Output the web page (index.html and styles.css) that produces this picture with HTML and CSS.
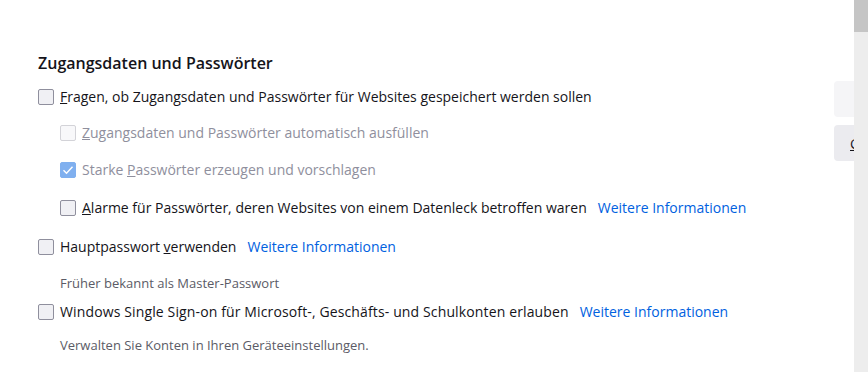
FILE: index.html
```html
<!DOCTYPE html>
<html lang="de">
<head>
    <meta charset="UTF-8">
    <title>Einstellungen</title>
    <link rel="stylesheet" href="styles.css">
</head>
<body>
    <div class="page">
        <h2 class="section-title">Zugangsdaten und Passwörter</h2>
        <div class="section-body">
            <div class="options">
                <label class="row">
                    <span class="box"></span>
                    <span><u>F</u>ragen, ob Zugangsdaten und Passwörter für Websites gespeichert werden sollen</span>
                </label>
                <label class="row nested disabled gap-1">
                    <span class="box"></span>
                    <span><u>Z</u>ugangsdaten und Passwörter automatisch ausfüllen</span>
                </label>
                <label class="row nested disabled gap-2">
                    <span class="box checked">
                        <svg width="12" height="12" viewBox="0 0 12 12" fill="none" stroke="#fff" stroke-width="1.4">
                            <path d="M1.5 6.2l3 3 6-6.4"/>
                        </svg>
                    </span>
                    <span>Starke <u>P</u>asswörter erzeugen und vorschlagen</span>
                </label>
                <label class="row nested gap-3">
                    <span class="box"></span>
                    <span><u>A</u>larme für Passwörter, deren Websites von einem Datenleck betroffen waren</span>
                    <a href="#" class="more">Weitere Informationen</a>
                </label>
                <label class="row gap-4">
                    <span class="box"></span>
                    <span>Hauptpasswort <u>v</u>erwenden</span>
                    <a href="#" class="more">Weitere Informationen</a>
                </label>
                <p class="note note-1">Früher bekannt als Master-Passwort</p>
                <label class="row wide gap-5">
                    <span class="box"></span>
                    <span>Windows Single Sign-on für Microsoft-, Geschäfts- und Schulkonten erlauben</span>
                    <a href="#" class="more">Weitere Informationen</a>
                </label>
                <p class="note note-2">Verwalten Sie Konten in Ihren Geräteeinstellungen.</p>
            </div>
            <div class="actions">
                <button class="btn" disabled>Ausnahmen…</button>
                <button class="btn"><u>G</u>espeicherte Zugangsdaten…</button>
            </div>
        </div>
    </div>
    <div class="scrollbar">
        <div class="thumb"></div>
    </div>
</body>
</html>
```

FILE: styles.css
```css
:root {
    --text-color: #15141a;
    --muted-color: #5b5b66;
    --link-color: #0061e0;
    --box-border: #8f8f9d;
    --box-bg: #f0f0f4;
}

body {
    margin: 0;
    height: 372px;
    display: flex;
    overflow: hidden;
    background: #ffffff;
    color: var(--text-color);
    font-family: "Open Sans", "Noto Sans", sans-serif;
    font-size: 14px;
}

.page {
    flex: 1;
    min-width: 0;
    overflow: hidden;
    padding: 51px 0 0 38px;
}

.section-title {
    margin: 0;
    font-size: 16px;
    font-weight: 600;
    line-height: 24px;
}

.section-body {
    display: flex;
    margin-top: 6px;
}

.options {
    flex: 0 0 796px;
    padding-top: 6px;
}

.row {
    display: flex;
    align-items: center;
    gap: 6px;
    height: 20px;
    line-height: 20px;
    white-space: nowrap;
}

.row.wide > span:last-of-type {
    letter-spacing: 0.13px;
}

.row.nested {
    margin-left: 22px;
}

.row.disabled {
    color: #8f8f9d;
}

.gap-1 { margin-top: 16px; }
.gap-2 { margin-top: 17px; }
.gap-3 { margin-top: 18px; }
.gap-4 { margin-top: 19px; }
.gap-5 { margin-top: 9px; }

.box {
    flex: none;
    width: 14px;
    height: 14px;
    border: 1px solid var(--box-border);
    border-radius: 2px;
    background: var(--box-bg);
    display: flex;
    align-items: center;
    justify-content: center;
}

.row.disabled .box {
    border-color: #d3d3d8;
    background: #f8f8fa;
}

.box.checked,
.row.disabled .box.checked {
    border-color: #80b0ef;
    background: #80b0ef;
}

.more {
    margin-left: 5px;
    color: var(--link-color);
    text-decoration: none;
}

.note {
    margin: 0 0 0 22px;
    line-height: 20px;
    font-size: 13px;
    color: var(--muted-color);
}

.note-1 { margin-top: 16px; }
.note-2 { margin-top: 13px; }

.actions {
    flex: none;
    display: flex;
    flex-direction: column;
    gap: 8px;
}

.btn {
    height: 36px;
    border: none;
    border-radius: 4px;
    background: #ebebef;
    color: var(--text-color);
    font: inherit;
    white-space: nowrap;
    text-align: center;
    padding: 0 16px;
}

.btn:disabled {
    background: #f5f5f7;
    color: #b0b0b8;
}

.scrollbar {
    flex: none;
    width: 14px;
    background: #ededed;
}

.thumb {
    height: 32px;
    background: #c5c5c5;
}
```
